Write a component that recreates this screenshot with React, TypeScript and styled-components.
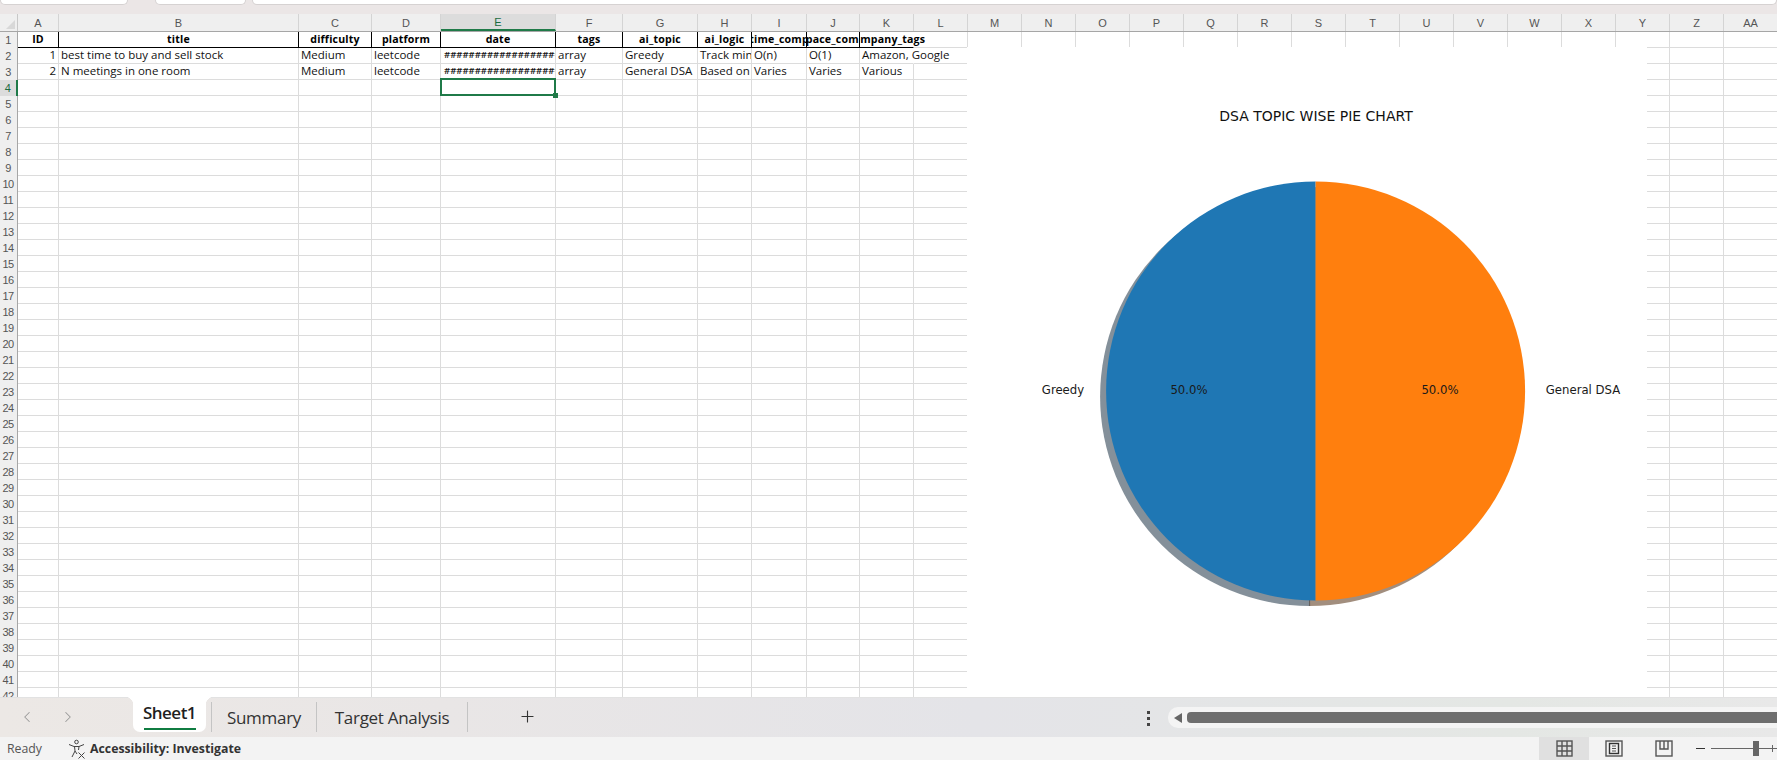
import styled, { createGlobalStyle } from "styled-components";
import { ChevronLeft, ChevronRight, Plus } from "lucide-react";

const GlobalStyle = createGlobalStyle`
  html, body {
    margin: 0;
    padding: 0;
    background: #fff;
    overflow: hidden;
  }
`;

const COLUMN_TEMPLATE = "18px 41px 240px 73px 69px 115px 67px 75px 54px 55px 53px 54px 54px repeat(15, 54px)";
const LETTERS = [
  "A", "B", "C", "D", "E", "F", "G", "H", "I", "J", "K", "L", "M", "N",
  "O", "P", "Q", "R", "S", "T", "U", "V", "W", "X", "Y", "Z", "AA",
];
const HEADERS = [
  "ID", "title", "difficulty", "platform", "date", "tags",
  "ai_topic", "ai_logic", "time_comp", "space_comp", "company_tags",
];
const HASHES = "####################";
const DATA = [
  ["1", "best time to buy and sell stock", "Medium", "leetcode", HASHES, "array", "Greedy", "Track min price", "O(n)", "O(1)", "Amazon, Google"],
  ["2", "N meetings in one room", "Medium", "leetcode", HASHES, "array", "General DSA", "Based on", "Varies", "Varies", "Various"],
];

const Page = styled.div`
  display: flex;
  flex-direction: column;
  width: 1777px;
  height: 760px;
  overflow: hidden;
  font-family: "Open Sans", "Liberation Sans", sans-serif;
`;

const TopStrip = styled.div`
  display: flex;
  gap: 6px;
  flex: 0 0 14px;
  box-sizing: border-box;
  background: #ebe6e6;
`;

const TopPill = styled.div<{ $width?: number }>`
  flex: ${(p) => (p.$width ? `0 0 ${p.$width}px` : "1")};
  height: 5px;
  margin-right: ${(p) => (p.$width === 128 ? 21 : 0)}px;
  background: #fff;
  border: 1px solid #d6d2d2;
  border-top: 0;
  border-radius: 0 0 6px 6px;
  box-sizing: border-box;
`;

const HeaderRow = styled.div`
  display: grid;
  grid-template-columns: ${COLUMN_TEMPLATE};
  flex: 0 0 17px;
  box-sizing: border-box;
  background: #efefef;
  border-bottom: 1px solid #a6a6a6;
`;

const Corner = styled.div`
  position: relative;
  border-right: 1px solid #c8c8c8;

  &::after {
    content: "";
    position: absolute;
    right: 2px;
    bottom: 2px;
    border-style: solid;
    border-width: 0 0 9px 9px;
    border-color: transparent transparent #d8d8d8 transparent;
  }
`;

const ColumnLetter = styled.div<{ $active?: boolean }>`
  display: flex;
  align-items: center;
  justify-content: center;
  box-sizing: border-box;
  height: 17px;
  font: 400 11px "Liberation Sans", sans-serif;
  color: ${(p) => (p.$active ? "#1a6b3f" : "#555")};
  background: ${(p) => (p.$active ? "#dcdcdc" : "transparent")};
  border-right: 1px solid #d4d4d4;
  border-bottom: ${(p) => (p.$active ? "2px solid #1f7a48" : "0")};
  margin-bottom: ${(p) => (p.$active ? "-1px" : "0")};
`;

const SheetArea = styled.div`
  position: relative;
  flex: 1;
  overflow: hidden;
  background: #fff;
`;

const SheetRow = styled.div`
  display: grid;
  grid-template-columns: ${COLUMN_TEMPLATE};
  height: 16px;
`;

const RowNumber = styled.div<{ $active?: boolean }>`
  box-sizing: border-box;
  height: 16px;
  padding-right: 1px;
  text-align: center;
  font: 400 11px/16px "Liberation Sans", sans-serif;
  letter-spacing: -0.5px;
  color: ${(p) => (p.$active ? "#1a6b3f" : "#555")};
  background: ${(p) => (p.$active ? "#dcdcdc" : "#efefef")};
  border-right: ${(p) => (p.$active ? "2px solid #1f7a48" : "1px solid #a6a6a6")};
`;

const Cell = styled.div<{ $noRight?: boolean }>`
  box-sizing: border-box;
  height: 16px;
  padding: 0 2px;
  font-size: 11.5px;
  line-height: 14px;
  color: #111;
  white-space: nowrap;
  border-right: 1px solid ${(p) => (p.$noRight ? "transparent" : "#dcdcdc")};
  border-bottom: 1px solid #dcdcdc;
  overflow: hidden;
`;

const SpillCell = styled(Cell)`
  overflow: visible;
`;

const NumberCell = styled(Cell)`
  text-align: right;
`;

const HashCell = styled(Cell)`
  padding: 0 3px;
  font-size: 9.5px;
  font-weight: 600;
`;

const SelectedCell = styled(Cell)`
  position: relative;
  overflow: visible;

  &::before {
    content: "";
    position: absolute;
    left: -1px;
    top: -2px;
    right: -1px;
    bottom: -1px;
    border: 2px solid #1f7a48;
  }

  &::after {
    content: "";
    position: absolute;
    right: -3px;
    bottom: -3px;
    width: 5px;
    height: 5px;
    background: #1f7a48;
  }
`;

const HeaderCell = styled.div<{ $spill?: boolean }>`
  display: flex;
  justify-content: center;
  box-sizing: border-box;
  height: 16px;
  font-size: 10.6px;
  font-weight: 700;
  letter-spacing: 0.18px;
  line-height: 15px;
  color: #000;
  white-space: nowrap;
  border-right: 1px solid ${(p) => (p.$spill ? "transparent" : "#000")};
  border-bottom: 1px solid #000;
  overflow: ${(p) => (p.$spill ? "visible" : "hidden")};
  clip-path: ${(p) => (p.$spill ? "inset(0 -40px 0 0)" : "none")};
`;

const ChartFrame = styled.svg`
  position: absolute;
  left: 967px;
  top: 15px;
  display: block;
  background: #fff;
`;

const TabBar = styled.div`
  position: relative;
  display: flex;
  align-items: stretch;
  flex: 0 0 40px;
  border-top: 1px solid #e2e2e2;
  box-sizing: border-box;
  background: linear-gradient(90deg, #ece8e5 0%, #e9e6e6 25%, #e4e4e8 55%, #e4e7e4 85%, #e8e8e8 100%);
`;

const TabNav = styled.div`
  display: flex;
  align-items: center;
  gap: 23px;
  width: 133px;
  padding: 0 0 2px 18px;
  box-sizing: border-box;
  color: #9a9a9a;
`;

const ActiveTab = styled.div`
  position: relative;
  display: flex;
  flex-direction: column;
  align-items: center;
  width: 73px;
  height: 35px;
  margin-top: -1px;
  background: #fff;
  border-radius: 0 0 7px 7px;
  font-size: 17px;
  font-weight: 600;
  line-height: 31px;
  color: #1f1f1f;
  letter-spacing: -0.5px;

  &::before,
  &::after {
    content: "";
    position: absolute;
    top: 0;
    width: 8px;
    height: 8px;
  }

  &::before {
    left: -8px;
    background: radial-gradient(circle at 0 100%, transparent 8px, #fff 8.5px);
  }

  &::after {
    right: -8px;
    background: radial-gradient(circle at 100% 100%, transparent 8px, #fff 8.5px);
  }
`;

const TabUnderline = styled.div`
  width: 52px;
  height: 2px;
  background: #107c41;
`;

const TabItem = styled.div<{ $width: number; $first?: boolean }>`
  display: flex;
  align-items: center;
  justify-content: center;
  box-sizing: border-box;
  width: ${(p) => p.$width}px;
  height: 30px;
  margin-top: 4px;
  margin-left: ${(p) => (p.$first ? 5 : 0)}px;
  font-size: 17px;
  letter-spacing: -0.3px;
  color: #333;
  border-right: 1px solid #c4c4c4;
  border-left: ${(p) => (p.$first ? "1px solid #c4c4c4" : "0")};
`;

const AddSheet = styled.div`
  display: flex;
  align-items: center;
  margin-left: 50px;
  padding-bottom: 2px;
  color: #333;
`;

const MoreDots = styled.div`
  display: flex;
  flex-direction: column;
  justify-content: center;
  gap: 3px;
  margin-left: auto;
  margin-right: 18px;
  padding-top: 1px;
`;

const Dot = styled.span`
  width: 3px;
  height: 3px;
  background: #444;
`;

const ScrollTrack = styled.div`
  display: flex;
  align-items: center;
  gap: 5px;
  box-sizing: border-box;
  width: 609px;
  height: 21px;
  margin-top: 9px;
  padding-left: 6px;
  background: #f4f4f4;
  border-radius: 10px 0 0 10px;
`;

const ScrollArrow = styled.div`
  border-style: solid;
  border-width: 5px 8px 5px 0;
  border-color: transparent #666 transparent transparent;
`;

const ScrollThumb = styled.div`
  flex: 1;
  height: 11px;
  background: #6e6e6e;
  border-radius: 4px 0 0 4px;
`;

const StatusBar = styled.div`
  display: flex;
  align-items: center;
  flex: 0 0 23px;
  background: #f3f3f3;
  font-size: 12.3px;
  color: #555;
`;

const StatusReady = styled.div`
  width: 68px;
  padding-left: 7px;
  box-sizing: border-box;
`;

const AccessLabel = styled.div`
  display: flex;
  align-items: center;
  gap: 2px;
  font-weight: 700;
  color: #333;
`;

const ViewButtons = styled.div`
  display: flex;
  align-self: stretch;
  margin-left: auto;
`;

const ViewButton = styled.div<{ $active?: boolean }>`
  display: flex;
  align-items: center;
  justify-content: center;
  width: 50px;
  background: ${(p) => (p.$active ? "#e0e0e0" : "transparent")};
`;

const ZoomControl = styled.div`
  display: flex;
  align-items: center;
  width: 88px;
  padding-left: 7px;
  box-sizing: border-box;
`;

const ZoomMinus = styled.div`
  width: 9px;
  height: 1px;
  margin-right: 6px;
  background: #333;
`;

const ZoomTrack = styled.div`
  position: relative;
  flex: 1;
  height: 1px;
  background: #666;
`;

const ZoomThumb = styled.div`
  position: absolute;
  left: 42px;
  top: -7px;
  width: 6px;
  height: 15px;
  background: #666;
`;

const ZoomPlus = styled.div`
  position: absolute;
  left: 61px;
  top: -3px;
  width: 1px;
  height: 7px;
  background: #666;
`;

function DataRow({ index, values }: { index: number; values: string[] }) {
  return (
    <SheetRow>
      <RowNumber>{index}</RowNumber>
      <NumberCell>{values[0]}</NumberCell>
      {values.slice(1, 10).map((value, i) =>
        value === HASHES ? <HashCell key={i}>{value}</HashCell> : <Cell key={i}>{value}</Cell>,
      )}
      {values[10] === "Amazon, Google" ? (
        <SpillCell $noRight>{values[10]}</SpillCell>
      ) : (
        <Cell>{values[10]}</Cell>
      )}
      <Cell />
      {LETTERS.slice(12).map((l) => (
        <Cell key={l} />
      ))}
    </SheetRow>
  );
}

function EmptyRow({ index }: { index: number }) {
  return (
    <SheetRow>
      <RowNumber $active={index === 4}>{index}</RowNumber>
      {LETTERS.map((l) =>
        index === 4 && l === "E" ? <SelectedCell key={l} /> : <Cell key={l} />,
      )}
    </SheetRow>
  );
}

function PieChart() {
  const cx = 348.6;
  const cy = 344;
  const r = 209.5;
  return (
    <ChartFrame width={680} height={651} viewBox="0 0 680 651">
      <text x={349} y={74} textAnchor="middle" fontFamily="DejaVu Sans" fontSize={14} fill="#111">
        DSA TOPIC WISE PIE CHART
      </text>
      <path d={`M${cx - 6} ${cy + 5.5 - r}A${r} ${r} 0 0 0 ${cx - 6} ${cy + 5.5 + r}Z`} fill="#84909a" />
      <path d={`M${cx - 6} ${cy + 5.5 - r}A${r} ${r} 0 0 1 ${cx - 6} ${cy + 5.5 + r}Z`} fill="#a28e7e" />
      <line x1={cx - 6} y1={cy + r - 1} x2={cx - 6} y2={cy + r + 5.5} stroke="#5f5a56" strokeWidth={1} />
      <path d={`M${cx} ${cy - r}A${r} ${r} 0 0 0 ${cx} ${cy + r}Z`} fill="#1f77b4" />
      <path d={`M${cx} ${cy - r}A${r} ${r} 0 0 1 ${cx} ${cy + r}Z`} fill="#ff7f0e" />
      <g fontFamily="DejaVu Sans" fontSize={11.7} fill="#1a1a1a">
        <text x={96} y={347} textAnchor="middle">Greedy</text>
        <text x={222} y={347} textAnchor="middle">50.0%</text>
        <text x={473} y={347} textAnchor="middle">50.0%</text>
        <text x={616} y={347} textAnchor="middle">General DSA</text>
      </g>
    </ChartFrame>
  );
}

function AccessibilityIcon() {
  return (
    <svg width="20" height="20" viewBox="0 0 20 20" fill="none" stroke="#444" strokeWidth="1">
      <circle cx="8.5" cy="3" r="1.8" />
      <path d="M1 5.5 6 7.5h5l5-2M6.5 7.5 7 12l-3 6M11 7.5l-.5 3.5" />
      <path d="M10.5 13.5l6 6M16.5 13.5l-6 6M7 12l2 3" />
    </svg>
  );
}

function NormalViewIcon() {
  return (
    <svg width="17" height="17" viewBox="0 0 17 17" fill="none" stroke="#555" strokeWidth="1.4">
      <rect x="1" y="1" width="15" height="15" />
      <path d="M6 1v15M11 1v15M1 6h15M1 11h15" />
    </svg>
  );
}

function PageLayoutIcon() {
  return (
    <svg width="18" height="17" viewBox="0 0 18 17" fill="none" stroke="#555" strokeWidth="1.4">
      <rect x="1" y="1" width="16" height="15" />
      <rect x="4.5" y="3.5" width="9" height="10" stroke="#333" />
      <path d="M7 6h4M7 8.5h4M7 11h4" strokeWidth="1" />
    </svg>
  );
}

function PageBreakIcon() {
  return (
    <svg width="18" height="17" viewBox="0 0 18 17" fill="none" stroke="#555" strokeWidth="1.4">
      <rect x="1" y="1" width="16" height="15" />
      <path d="M5 1v8h8V1M9 1v8" />
    </svg>
  );
}

export default function App() {
  const rowNumbers = Array.from({ length: 40 }, (_, i) => i + 4);

  return (
    <>
      <GlobalStyle />
      <Page>
        <TopStrip>
          <TopPill $width={128} />
          <TopPill $width={91} />
          <TopPill />
        </TopStrip>

        <HeaderRow>
          <Corner />
          {LETTERS.map((l) => (
            <ColumnLetter key={l} $active={l === "E"}>{l}</ColumnLetter>
          ))}
        </HeaderRow>

        <SheetArea>
          <SheetRow>
            <RowNumber>1</RowNumber>
            {HEADERS.map((h) => (
              <HeaderCell key={h} $spill={h === "company_tags"}>{h}</HeaderCell>
            ))}
            <Cell />
            {LETTERS.slice(12).map((l) => (
              <Cell key={l} />
            ))}
          </SheetRow>
          {DATA.map((values, i) => (
            <DataRow key={i} index={i + 2} values={values} />
          ))}
          {rowNumbers.map((n) => (
            <EmptyRow key={n} index={n} />
          ))}
          <PieChart />
        </SheetArea>

        <TabBar>
          <TabNav>
            <ChevronLeft size={18} strokeWidth={1.4} />
            <ChevronRight size={18} strokeWidth={1.4} />
          </TabNav>
          <ActiveTab>
            Sheet1
            <TabUnderline />
          </ActiveTab>
          <TabItem $width={106} $first>Summary</TabItem>
          <TabItem $width={151}>Target Analysis</TabItem>
          <AddSheet>
            <Plus size={19} strokeWidth={1.4} />
          </AddSheet>
          <MoreDots>
            <Dot />
            <Dot />
            <Dot />
          </MoreDots>
          <ScrollTrack>
            <ScrollArrow />
            <ScrollThumb />
          </ScrollTrack>
        </TabBar>

        <StatusBar>
          <StatusReady>Ready</StatusReady>
          <AccessLabel>
            <AccessibilityIcon />
            Accessibility: Investigate
          </AccessLabel>
          <ViewButtons>
            <ViewButton $active><NormalViewIcon /></ViewButton>
            <ViewButton><PageLayoutIcon /></ViewButton>
            <ViewButton><PageBreakIcon /></ViewButton>
          </ViewButtons>
          <ZoomControl>
            <ZoomMinus />
            <ZoomTrack>
              <ZoomThumb />
              <ZoomPlus />
            </ZoomTrack>
          </ZoomControl>
        </StatusBar>
      </Page>
    </>
  );
}
